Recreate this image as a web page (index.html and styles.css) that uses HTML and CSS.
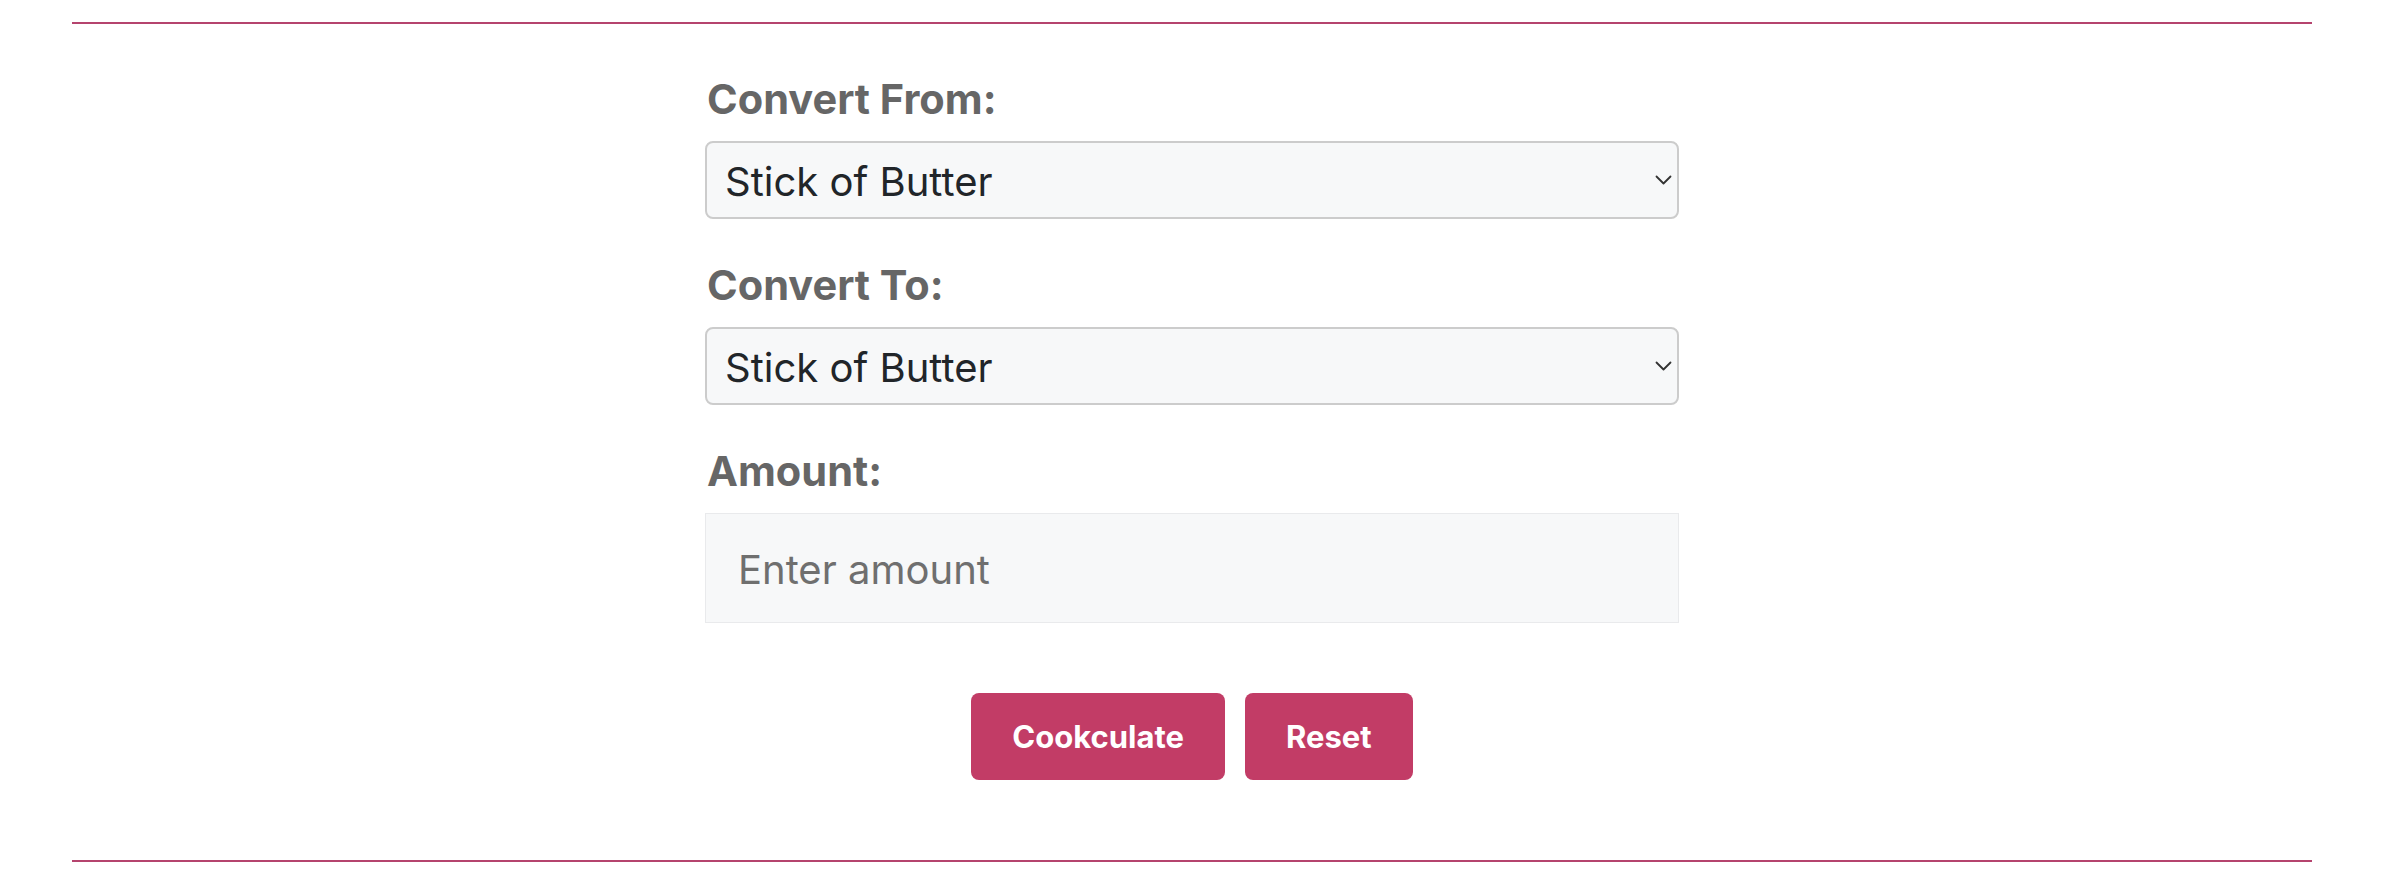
FILE: index.html
```html
<!DOCTYPE html>
<html lang="en">
<head>
  <meta charset="UTF-8" />
  <title>Cookculator</title>
  <meta name="viewport" content="width=device-width, initial-scale=1.0" />
  <link rel="stylesheet" href="styles.css">
</head>
<body>
  <div class="page">
    <hr class="rule" />

    <form class="converter">
      <div class="field">
        <label for="from_unit">Convert From:</label>
        <div class="select-wrap">
          <select id="from_unit">
            <option>Stick of Butter</option>
            <option>Cup</option>
            <option>Tablespoon</option>
            <option>Teaspoon</option>
            <option>Gram</option>
          </select>
          <svg class="chevron" width="17" height="10" viewBox="0 0 17 10"><polyline points="1.5,1.5 8.5,8.5 15.5,1.5" fill="none" stroke="#333" stroke-width="1.8" stroke-linecap="round" stroke-linejoin="round"/></svg>
        </div>
      </div>

      <div class="field">
        <label for="to_unit">Convert To:</label>
        <div class="select-wrap">
          <select id="to_unit">
            <option>Stick of Butter</option>
            <option>Cup</option>
            <option>Tablespoon</option>
            <option>Teaspoon</option>
            <option>Gram</option>
          </select>
          <svg class="chevron" width="17" height="10" viewBox="0 0 17 10"><polyline points="1.5,1.5 8.5,8.5 15.5,1.5" fill="none" stroke="#333" stroke-width="1.8" stroke-linecap="round" stroke-linejoin="round"/></svg>
        </div>
      </div>

      <div class="field">
        <label for="amount_input">Amount:</label>
        <input type="number" id="amount_input" placeholder="Enter amount" />
      </div>

      <div class="actions">
        <button type="button">Cookculate</button>
        <button type="reset">Reset</button>
      </div>
    </form>

    <hr class="rule" />
  </div>
</body>
</html>
```

FILE: styles.css
```css
:root {
  --accent: #c23c66;
  --rule: #b5446e;
  --label: #666666;
  --field-bg: #f7f8f9;
}

body {
  font-family: 'Inter', 'Noto Sans', sans-serif;
  background-color: #ffffff;
  margin: 0;
}

.page {
  padding: 22px 76px 0 72px;
}

.rule {
  border: none;
  border-top: 2px solid var(--rule);
  margin: 0;
}

.converter {
  width: 974px;
  margin: 0 auto;
  padding: 51px 0 80px;
}

.field {
  margin-bottom: 42px;
}

.field label {
  display: block;
  font-size: 41.5px;
  font-weight: 700;
  line-height: 48px;
  color: var(--label);
  padding-left: 2px;
  margin-bottom: 18px;
}

.select-wrap {
  position: relative;
}

select {
  appearance: none;
  -webkit-appearance: none;
  width: 100%;
  height: 78px;
  font-family: inherit;
  font-size: 40px;
  color: #212529;
  background-color: var(--field-bg);
  border: 2px solid #cccccc;
  border-radius: 8px;
  padding: 3px 40px 0 18px;
  box-sizing: border-box;
}

.chevron {
  position: absolute;
  right: 7px;
  top: 34px;
  pointer-events: none;
}

input[type="number"] {
  width: 100%;
  height: 110px;
  font-family: inherit;
  font-size: 40px;
  color: #212529;
  background-color: var(--field-bg);
  border: 1px solid #e9eaec;
  border-radius: 0;
  padding: 2px 32px 0;
  box-sizing: border-box;
}

input::placeholder {
  color: #6f6f6f;
}

.actions {
  display: flex;
  justify-content: center;
  gap: 20px;
  margin-top: 70px;
}

button {
  background-color: var(--accent);
  border: none;
  color: white;
  height: 87px;
  padding: 0 41px;
  font-family: inherit;
  font-size: 31px;
  font-weight: 700;
  border-radius: 8px;
  cursor: pointer;
}

button:hover {
  background-color: #a8325a;
}
```
